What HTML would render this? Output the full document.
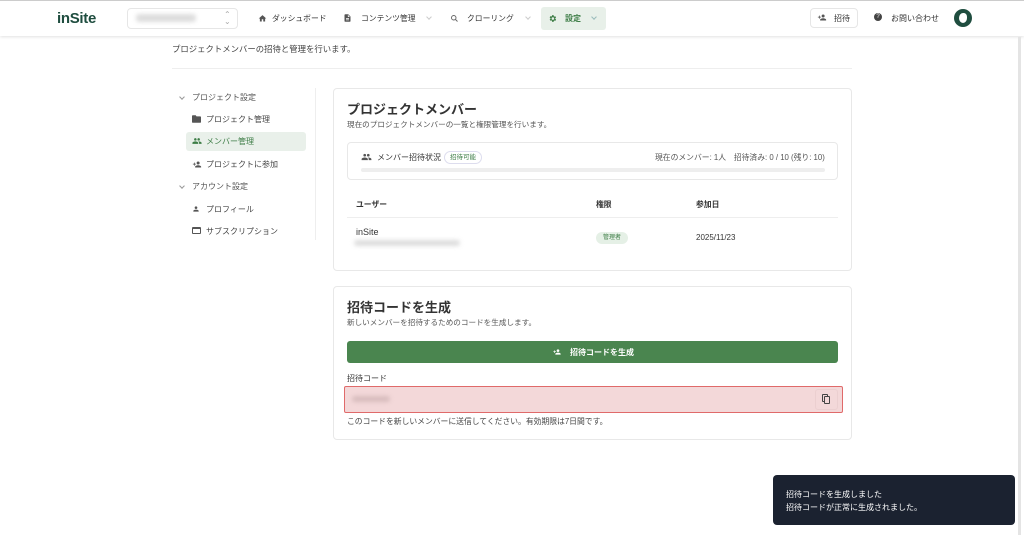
<!DOCTYPE html>
<html><head><meta charset="utf-8"><style>
*{box-sizing:border-box;margin:0;padding:0}
body{width:1024px;height:535px;overflow:hidden;background:#fff;font-family:"Liberation Sans","Noto Sans CJK JP",sans-serif;color:#333;font-size:8px;position:relative}
.a{position:absolute;white-space:nowrap}
.hdr{position:absolute;left:0;top:0;width:1024px;height:36px;background:#fff;box-shadow:0 1px 3px rgba(0,0,0,.12);border-top:1px solid #ccc}
.card{position:absolute;border:1px solid #e8e8e8;border-radius:4px;background:#fff}
.ic{fill:#555}
.blur{position:absolute;background:#ddd;filter:blur(2px);border-radius:3px}
.chev{position:absolute;width:4px;height:4px;border-right:1px solid #999;border-bottom:1px solid #999;transform:rotate(45deg)}
</style></head><body>
<div class="hdr"></div>
<div class="a" style="left:57px;top:10px;font-size:15px;font-weight:bold;color:#1f4d3f;letter-spacing:-.3px">inSite</div>
<div class="a" style="left:127px;top:8px;width:111px;height:21px;border:1px solid #e6e6e6;border-radius:4px"></div>
<div class="blur" style="left:136px;top:14px;width:60px;height:8px"></div>
<div class="a" style="left:224px;top:11px;font-size:8px;color:#aaa;line-height:7px">⌃<br>⌄</div>
<svg class="a" style="left:258px;top:14px" width="9" height="9" viewBox="0 0 24 24"><path class="ic" d="M10 20v-6h4v6h5v-8h3L12 3 2 12h3v8z"/></svg>
<div class="a" style="left:272px;top:13px;font-size:7.8px">ダッシュボード</div>
<svg class="a" style="left:343px;top:13px" width="9" height="10" viewBox="0 0 24 24"><path class="ic" d="M14 2H6a2 2 0 0 0-2 2v16a2 2 0 0 0 2 2h12a2 2 0 0 0 2-2V8zM16 18H8v-2h8zm0-4H8v-2h8zm-3-5V3.5L18.5 9z"/></svg>
<div class="a" style="left:361px;top:13px;font-size:7.8px">コンテンツ管理</div>
<div class="chev" style="left:427px;top:15px;border-color:#ccc"></div>
<svg class="a" style="left:450px;top:14px" width="9" height="9" viewBox="0 0 24 24"><path d="M10 4a6 6 0 1 1 0 12a6 6 0 1 1 0-12zM15 15l5 5" stroke="#666" stroke-width="2.5" fill="none"/></svg>
<div class="a" style="left:467px;top:13px;font-size:7.8px">クローリング</div>
<div class="chev" style="left:526px;top:15px;border-color:#ccc"></div>
<div class="a" style="left:541px;top:7px;width:65px;height:23px;background:#e8f0e9;border-radius:3px"></div>
<svg class="a" style="left:548px;top:14px" width="9" height="9" viewBox="0 0 24 24"><path fill="#3d7d46" d="M19.4 13a7.5 7.5 0 0 0 0-2l2.1-1.6-2-3.5-2.5 1a7 7 0 0 0-1.7-1L15 3h-4l-.4 2.7a7 7 0 0 0-1.7 1l-2.5-1-2 3.5L6.6 11a7.5 7.5 0 0 0 0 2l-2.1 1.6 2 3.5 2.5-1a7 7 0 0 0 1.7 1L11 21h4l.4-2.7a7 7 0 0 0 1.7-1l2.5 1 2-3.5zM13 15.5a3.5 3.5 0 1 1 0-7a3.5 3.5 0 0 1 0 7z"/></svg>
<div class="a" style="left:565px;top:13px;color:#3d7d46;font-weight:bold">設定</div>
<div class="chev" style="left:592px;top:15px;border-color:#9bb"></div>
<div class="a" style="left:810px;top:8px;width:48px;height:20px;border:1px solid #e6e6e6;border-radius:4px"></div>
<svg class="a" style="left:817px;top:13px" width="10" height="9" viewBox="0 0 24 24"><path class="ic" d="M15 12a4 4 0 1 0 0-8a4 4 0 0 0 0 8zm-9-2V7H4v3H1v2h3v3h2v-3h3v-2zm9 4c-2.7 0-8 1.3-8 4v2h16v-2c0-2.7-5.3-4-8-4z"/></svg>
<div class="a" style="left:834px;top:13px">招待</div>
<div class="a" style="left:874px;top:13px;width:8px;height:8px;border-radius:50%;background:#444;color:#fff;font-size:6px;text-align:center;line-height:8px">?</div>
<div class="a" style="left:891px;top:13px">お問い合わせ</div>
<div class="a" style="left:954px;top:9px;width:18px;height:18px;border-radius:50%;background:#1f4d3f"></div>
<div class="a" style="left:959px;top:13px;width:8px;height:10px;border-radius:50% 40% 50% 50%;background:#fff"></div>
<div class="a" style="left:1018px;top:37px;width:3px;height:498px;background:#e4e4e4"></div>

<div class="a" style="left:172px;top:43px;color:#444;font-size:8.4px">プロジェクトメンバーの招待と管理を行います。</div>
<div class="a" style="left:172px;top:68px;width:680px;height:1px;background:#eee"></div>

<div class="a" style="left:315px;top:88px;width:1px;height:152px;background:#eee"></div>
<div class="chev" style="left:180px;top:95px"></div>
<div class="a" style="left:192px;top:92px;color:#555">プロジェクト設定</div>
<svg class="a" style="left:192px;top:115px" width="9" height="8" viewBox="0 0 24 20"><path class="ic" d="M10 0H2a2 2 0 0 0-2 2v16a2 2 0 0 0 2 2h20a2 2 0 0 0 2-2V5a2 2 0 0 0-2-2H12z"/></svg>
<div class="a" style="left:206px;top:114px;color:#444">プロジェクト管理</div>
<div class="a" style="left:186px;top:132px;width:120px;height:19px;background:#e9f0ea;border-radius:3px"></div>
<svg class="a" style="left:192px;top:137px" width="10" height="8" viewBox="0 0 24 18"><path fill="#3d7d46" d="M16 8a3 3 0 1 0 0-6a3 3 0 0 0 0 6zm-8 0a3 3 0 1 0 0-6a3 3 0 0 0 0 6zm0 2c-2.3 0-7 1.2-7 3.5V16h14v-2.5C15 11.2 10.3 10 8 10zm8 0c-.3 0-.6 0-1 .1 1.2.8 2 2 2 3.4V16h6v-2.5c0-2.3-4.7-3.5-7-3.5z"/></svg>
<div class="a" style="left:206px;top:136px;color:#3d7d46">メンバー管理</div>
<svg class="a" style="left:192px;top:160px" width="10" height="9" viewBox="0 0 24 24"><path class="ic" d="M15 12a4 4 0 1 0 0-8a4 4 0 0 0 0 8zm-9-2V7H4v3H1v2h3v3h2v-3h3v-2zm9 4c-2.7 0-8 1.3-8 4v2h16v-2c0-2.7-5.3-4-8-4z"/></svg>
<div class="a" style="left:206px;top:159px;color:#444">プロジェクトに参加</div>
<div class="chev" style="left:180px;top:184px"></div>
<div class="a" style="left:192px;top:181px;color:#555">アカウント設定</div>
<svg class="a" style="left:192px;top:205px" width="8" height="8" viewBox="0 0 24 24"><path class="ic" d="M12 12a4 4 0 1 0 0-8a4 4 0 0 0 0 8zm0 2c-2.7 0-8 1.3-8 4v2h16v-2c0-2.7-5.3-4-8-4z"/></svg>
<div class="a" style="left:206px;top:204px;color:#444">プロフィール</div>
<div class="a" style="left:192px;top:227px;width:9px;height:7px;border:1px solid #555;border-top-width:2px;border-radius:1px"></div>
<div class="a" style="left:206px;top:226px;color:#444">サブスクリプション</div>

<div class="card" style="left:333px;top:88px;width:519px;height:183px"></div>
<div class="a" style="left:347px;top:99px;font-size:13px;font-weight:bold;color:#333">プロジェクトメンバー</div>
<div class="a" style="left:347px;top:119px;font-size:7.6px;color:#555">現在のプロジェクトメンバーの一覧と権限管理を行います。</div>
<div class="card" style="left:347px;top:142px;width:491px;height:38px;border-radius:4px"></div>
<svg class="a" style="left:361px;top:153px" width="11" height="8" viewBox="0 0 24 18"><path class="ic" d="M16 8a3 3 0 1 0 0-6a3 3 0 0 0 0 6zm-8 0a3 3 0 1 0 0-6a3 3 0 0 0 0 6zm0 2c-2.3 0-7 1.2-7 3.5V16h14v-2.5C15 11.2 10.3 10 8 10zm8 0c-.3 0-.6 0-1 .1 1.2.8 2 2 2 3.4V16h6v-2.5c0-2.3-4.7-3.5-7-3.5z"/></svg>
<div class="a" style="left:377px;top:152px;color:#333">メンバー招待状況</div>
<div class="a" style="left:444px;top:151px;height:13px;padding:0 5px;border:1px solid #dde;border-radius:7px;color:#3d7d46;font-size:6.5px;line-height:11px">招待可能</div>
<div class="a" style="left:655px;top:152px;color:#555;font-size:7.8px">現在のメンバー: 1人　招待済み: 0 / 10 (残り: 10)</div>
<div class="a" style="left:361px;top:168px;width:464px;height:4px;background:#eee;border-radius:2px"></div>
<div class="a" style="left:356px;top:199px;font-weight:bold;font-size:7.8px">ユーザー</div>
<div class="a" style="left:596px;top:199px;font-weight:bold;font-size:7.8px">権限</div>
<div class="a" style="left:696px;top:199px;font-weight:bold;font-size:7.8px">参加日</div>
<div class="a" style="left:347px;top:217px;width:491px;height:1px;background:#eee"></div>
<div class="a" style="left:356px;top:227px;font-size:9px;color:#333">inSite</div>
<div class="blur" style="left:354px;top:240px;width:106px;height:6px"></div>
<div class="a" style="left:596px;top:232px;width:32px;height:12px;background:#e5f0e6;border-radius:6px;color:#3d7d46;font-size:6px;text-align:center;line-height:12px">管理者</div>
<div class="a" style="left:696px;top:233px;font-size:8px;color:#333">2025/11/23</div>

<div class="card" style="left:333px;top:286px;width:519px;height:154px"></div>
<div class="a" style="left:347px;top:297px;font-size:13px;font-weight:bold;color:#333">招待コードを生成</div>
<div class="a" style="left:347px;top:317px;font-size:7.6px;color:#555">新しいメンバーを招待するためのコードを生成します。</div>
<div class="a" style="left:347px;top:341px;width:491px;height:22px;background:#4a854f;border-radius:3px"></div>
<svg class="a" style="left:552px;top:348px" width="10" height="8" viewBox="0 0 24 24"><path fill="#fff" d="M15 12a4 4 0 1 0 0-8a4 4 0 0 0 0 8zm-9-2V7H4v3H1v2h3v3h2v-3h3v-2zm9 4c-2.7 0-8 1.3-8 4v2h16v-2c0-2.7-5.3-4-8-4z"/></svg>
<div class="a" style="left:570px;top:347px;color:#fff;font-weight:bold;font-size:8px">招待コードを生成</div>
<div class="a" style="left:347px;top:373px;font-size:8px;color:#333">招待コード</div>
<div class="a" style="left:344px;top:386px;width:499px;height:27px;background:#f3d8d9;border:1px solid #e06a6a;border-radius:2px"></div>
<div class="a" style="left:815px;top:389px;width:23px;height:21px;border:1px solid #ebcfd0;border-radius:3px"></div>
<div class="a" style="left:822px;top:394px;width:6px;height:8px;border:1px solid #444;border-radius:1px"></div>
<div class="a" style="left:824px;top:396px;width:6px;height:8px;border:1px solid #444;border-radius:1px;background:#f3d8d9"></div>
<div class="blur" style="left:352px;top:396px;width:38px;height:6px;background:#d7bcbd"></div>
<div class="a" style="left:347px;top:416px;font-size:7.8px;color:#444">このコードを新しいメンバーに送信してください。有効期限は7日間です。</div>

<div class="a" style="left:773px;top:475px;width:242px;height:50px;background:#1b2230;border-radius:4px"></div>
<div class="a" style="left:786px;top:489px;color:#fff;font-size:8px">招待コードを生成しました</div>
<div class="a" style="left:786px;top:502px;color:#fff;font-size:8px">招待コードが正常に生成されました。</div>
</body></html>
